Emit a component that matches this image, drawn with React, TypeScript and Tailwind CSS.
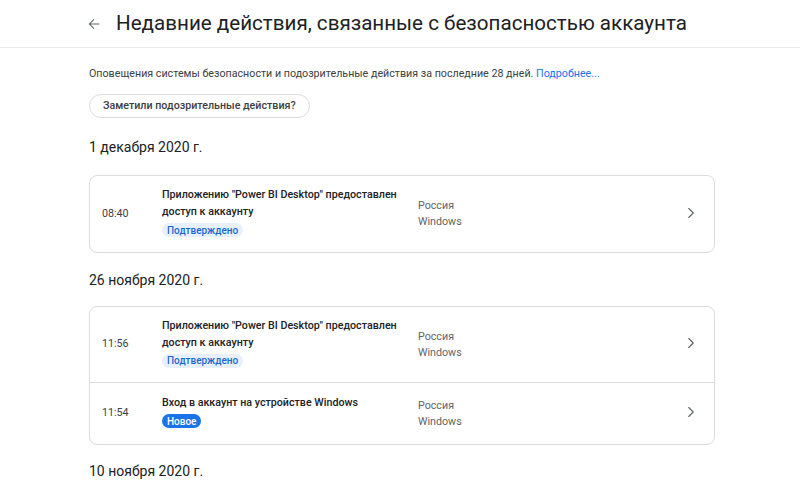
import { ChevronRight } from 'lucide-react';

type Event = {
  time: string;
  title: string;
  badge: 'confirmed' | 'new';
};

const groups: { date: string; events: Event[] }[] = [
  {
    date: '1 декабря 2020 г.',
    events: [
      { time: '08:40', title: 'Приложению "Power BI Desktop" предоставлен доступ к аккаунту', badge: 'confirmed' },
    ],
  },
  {
    date: '26 ноября 2020 г.',
    events: [
      { time: '11:56', title: 'Приложению "Power BI Desktop" предоставлен доступ к аккаунту', badge: 'confirmed' },
      { time: '11:54', title: 'Вход в аккаунт на устройстве Windows', badge: 'new' },
    ],
  },
];

function Badge({ kind }: { kind: Event['badge'] }) {
  if (kind === 'new') {
    return (
      <span className="inline-flex h-[14px] items-center rounded-full bg-[#1a73e8] px-[5px] text-[10px] font-medium text-white">
        Новое
      </span>
    );
  }
  return (
    <span className="inline-flex h-[14px] items-center rounded-full bg-[#e8f0fe] px-[5px] text-[10px] font-medium text-[#1967d2]">
      Подтверждено
    </span>
  );
}

function Row({ ev, last }: { ev: Event; last: boolean }) {
  const twoLines = ev.title.length > 40;
  return (
    <div
      className={`flex items-center pl-3 pr-[14px] ${twoLines ? 'h-[76px]' : 'h-[61px]'} ${
        last ? '' : 'border-b border-[#dadce0]'
      }`}
    >
      <div className="w-[60px] text-[10.7px] text-[#3c4043]">{ev.time}</div>
      <div className="flex w-[256px] flex-col items-start gap-[3px] pb-[5px]">
        <div className="w-[244px] text-[10.7px] font-medium leading-[17px] text-[#202124]">{ev.title}</div>
        <Badge kind={ev.badge} />
      </div>
      <div className="flex-1 text-[10.7px] leading-[16px] text-[#5f6368]">
        <div>Россия</div>
        <div>Windows</div>
      </div>
      <ChevronRight size={18} strokeWidth={1.5} className="mb-[3px] text-[#5f6368]" />
    </div>
  );
}

export default function App() {
  return (
    <div className="min-h-screen bg-white font-['Roboto',sans-serif] text-[#202124]">
      <header className="flex h-12 items-center border-b border-[#e8eaed] pl-[86px]">
        <svg width="16" height="16" viewBox="0 0 24 24" className="fill-[#5f6368]">
          <path d="M20 11.25H6.9l5.6-5.6-1.05-1.05L4 12l7.45 7.4 1.05-1.05-5.6-5.6H20z" />
        </svg>
        <h1 className="ml-[14px] text-[20.6px] font-normal leading-none text-[#202124]">
          Недавние действия, связанные с безопасностью аккаунта
        </h1>
      </header>

      <main className="w-[715px] pl-[89px] pt-[18px]">
        <p className="text-[10.7px] leading-4 text-[#3c4043]">
          Оповещения системы безопасности и подозрительные действия за последние 28 дней.{' '}
          <a className="text-[#1a73e8]">Подробнее...</a>
        </p>
        <button className="mt-3 h-6 rounded-full border border-[#dadce0] px-[13px] text-[10.7px] font-medium text-[#3c4043]">
          Заметили подозрительные действия?
        </button>

        {groups.map((g, gi) => (
          <section key={g.date}>
            <h2 className={`text-[14px] leading-5 text-[#202124] ${gi === 0 ? 'mt-[19px]' : 'mt-[17px]'}`}>
              {g.date}
            </h2>
            <div className={`${gi === 0 ? 'mt-[18px]' : 'mt-[16px]'} rounded-lg border border-[#dadce0]`}>
              {g.events.map((ev, i) => (
                <Row key={ev.time} ev={ev} last={i === g.events.length - 1} />
              ))}
            </div>
          </section>
        ))}

        <h2 className="mt-4 text-[14px] leading-5 text-[#202124]">10 ноября 2020 г.</h2>
      </main>
    </div>
  );
}
